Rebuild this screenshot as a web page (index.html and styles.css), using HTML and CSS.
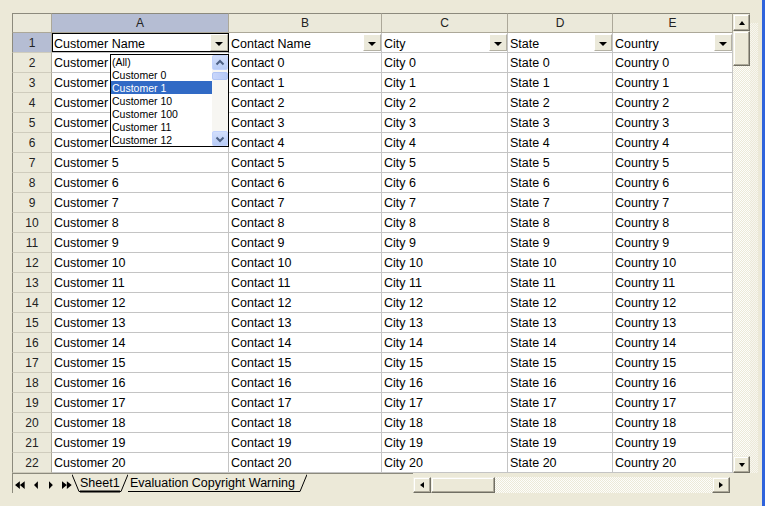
FILE: index.html
```html
<!DOCTYPE html>
<html>
<head>
<meta charset="utf-8">
<link rel="stylesheet" href="styles.css">
</head>
<body>
<div class="frame">
  <div class="content">
    <div class="top">
      <div class="sheet">
        <div class="ch corner"></div>
        <div class="ch sel">A</div>
        <div class="ch">B</div>
        <div class="ch">C</div>
        <div class="ch">D</div>
        <div class="ch">E</div>

        <div class="rh sel">1</div>
        <div class="c f active"><span class="t">Customer Name</span><span class="dd"><i></i></span></div>
        <div class="c f"><span class="t">Contact Name</span><span class="dd"><i></i></span></div>
        <div class="c f"><span class="t">City</span><span class="dd"><i></i></span></div>
        <div class="c f"><span class="t">State</span><span class="dd"><i></i></span></div>
        <div class="c f"><span class="t">Country</span><span class="dd"><i></i></span></div>

        <div class="rh">2</div><div class="c">Customer 0</div><div class="c">Contact 0</div><div class="c">City 0</div><div class="c">State 0</div><div class="c">Country 0</div>
        <div class="rh">3</div><div class="c">Customer 1</div><div class="c">Contact 1</div><div class="c">City 1</div><div class="c">State 1</div><div class="c">Country 1</div>
        <div class="rh">4</div><div class="c">Customer 2</div><div class="c">Contact 2</div><div class="c">City 2</div><div class="c">State 2</div><div class="c">Country 2</div>
        <div class="rh">5</div><div class="c">Customer 3</div><div class="c">Contact 3</div><div class="c">City 3</div><div class="c">State 3</div><div class="c">Country 3</div>
        <div class="rh">6</div><div class="c">Customer 4</div><div class="c">Contact 4</div><div class="c">City 4</div><div class="c">State 4</div><div class="c">Country 4</div>
        <div class="rh">7</div><div class="c">Customer 5</div><div class="c">Contact 5</div><div class="c">City 5</div><div class="c">State 5</div><div class="c">Country 5</div>
        <div class="rh">8</div><div class="c">Customer 6</div><div class="c">Contact 6</div><div class="c">City 6</div><div class="c">State 6</div><div class="c">Country 6</div>
        <div class="rh">9</div><div class="c">Customer 7</div><div class="c">Contact 7</div><div class="c">City 7</div><div class="c">State 7</div><div class="c">Country 7</div>
        <div class="rh">10</div><div class="c">Customer 8</div><div class="c">Contact 8</div><div class="c">City 8</div><div class="c">State 8</div><div class="c">Country 8</div>
        <div class="rh">11</div><div class="c">Customer 9</div><div class="c">Contact 9</div><div class="c">City 9</div><div class="c">State 9</div><div class="c">Country 9</div>
        <div class="rh">12</div><div class="c">Customer 10</div><div class="c">Contact 10</div><div class="c">City 10</div><div class="c">State 10</div><div class="c">Country 10</div>
        <div class="rh">13</div><div class="c">Customer 11</div><div class="c">Contact 11</div><div class="c">City 11</div><div class="c">State 11</div><div class="c">Country 11</div>
        <div class="rh">14</div><div class="c">Customer 12</div><div class="c">Contact 12</div><div class="c">City 12</div><div class="c">State 12</div><div class="c">Country 12</div>
        <div class="rh">15</div><div class="c">Customer 13</div><div class="c">Contact 13</div><div class="c">City 13</div><div class="c">State 13</div><div class="c">Country 13</div>
        <div class="rh">16</div><div class="c">Customer 14</div><div class="c">Contact 14</div><div class="c">City 14</div><div class="c">State 14</div><div class="c">Country 14</div>
        <div class="rh">17</div><div class="c">Customer 15</div><div class="c">Contact 15</div><div class="c">City 15</div><div class="c">State 15</div><div class="c">Country 15</div>
        <div class="rh">18</div><div class="c">Customer 16</div><div class="c">Contact 16</div><div class="c">City 16</div><div class="c">State 16</div><div class="c">Country 16</div>
        <div class="rh">19</div><div class="c">Customer 17</div><div class="c">Contact 17</div><div class="c">City 17</div><div class="c">State 17</div><div class="c">Country 17</div>
        <div class="rh">20</div><div class="c">Customer 18</div><div class="c">Contact 18</div><div class="c">City 18</div><div class="c">State 18</div><div class="c">Country 18</div>
        <div class="rh">21</div><div class="c">Customer 19</div><div class="c">Contact 19</div><div class="c">City 19</div><div class="c">State 19</div><div class="c">Country 19</div>
        <div class="rh">22</div><div class="c">Customer 20</div><div class="c">Contact 20</div><div class="c">City 20</div><div class="c">State 20</div><div class="c">Country 20</div>

        <div class="droplist">
          <div class="items">
            <div class="it">(All)</div>
            <div class="it">Customer 0</div>
            <div class="it on">Customer 1</div>
            <div class="it">Customer 10</div>
            <div class="it">Customer 100</div>
            <div class="it">Customer 11</div>
            <div class="it">Customer 12</div>
          </div>
          <div class="lscroll">
            <div class="lbtn"><svg width="14" height="14" viewBox="0 0 14 14"><path d="M3.5 8.5 L7 5 L10.5 8.5" fill="none" stroke="#4d6185" stroke-width="2"/></svg></div>
            <div class="lthumb"></div>
            <div class="ltrack"></div>
            <div class="lbtn"><svg width="14" height="14" viewBox="0 0 14 14"><path d="M3.5 5.5 L7 9 L10.5 5.5" fill="none" stroke="#4d6185" stroke-width="2"/></svg></div>
          </div>
        </div>
      </div>
      <div class="vscroll">
        <div class="btn"><i class="up"></i></div>
        <div class="vthumb"></div>
        <div class="track"></div>
        <div class="btn"><i class="down"></i></div>
      </div>
      <div class="strip"></div>
    </div>
    <div class="bottom">
      <div class="tabbar">
        <div class="nav">
          <svg width="12" height="8" viewBox="0 0 12 8"><path d="M0 4 L5 0 L5 8 Z M5 4 L10 0 L10 8 Z" fill="#000"/></svg>
          <svg width="5" height="8" viewBox="0 0 5 8"><path d="M0 4 L4 0 L4 8 Z" fill="#000"/></svg>
          <svg width="5" height="8" viewBox="0 0 5 8"><path d="M5 4 L1 0 L1 8 Z" fill="#000"/></svg>
          <svg width="10" height="8" viewBox="0 0 10 8"><path d="M5 4 L0 0 L0 8 Z M10 4 L5 0 L5 8 Z" fill="#000"/></svg>
        </div>
        <div class="tabs">
          <div class="tab act">
            <svg class="shape" viewBox="0 0 56 19" preserveAspectRatio="none"><path d="M0 0.5 L7 17.5 L49 17.5 L56 0.5" fill="none" stroke="#000" stroke-width="1"/><path d="M8 17.5 L48 17.5" stroke="#000" stroke-width="2"/></svg>
            <span>Sheet1</span>
          </div>
          <div class="tab">
            <svg class="shape" viewBox="0 0 179 19" preserveAspectRatio="none"><path d="M0 17.5 L172 17.5 L179 0.5" fill="none" stroke="#000" stroke-width="1"/></svg>
            <span>Evaluation Copyright Warning</span>
          </div>
        </div>
      </div>
      <div class="hscroll">
        <div class="hbtn"><i class="left"></i></div>
        <div class="hthumb"></div>
        <div class="track"></div>
        <div class="hbtn"><i class="right"></i></div>
      </div>
    </div>
  </div>
  <div class="edge"></div>
</div>
</body>
</html>
```

FILE: styles.css
```css
* { box-sizing: border-box; }
html, body { margin: 0; padding: 0; }
body {
  width: 765px;
  height: 506px;
  overflow: hidden;
  background: #ece9d8;
  font-family: "Liberation Sans", Arial, sans-serif;
  color: #000;
}
.frame { display: flex; height: 506px; }
.content {
  width: 762px;
  padding: 13px 0 0 12px;
  display: flex;
  flex-direction: column;
}
.edge { width: 3px; background: #2f63dc; }

.top { display: flex; height: 460px; }
.sheet {
  position: relative;
  display: grid;
  grid-template-columns: 40px 177px 153px 126px 105px 120px;
  grid-auto-rows: 20px;
  width: 721px;
  height: 460px;
  background: #fff;
  font-size: 12.5px;
}
.ch {
  background: #ebe9da;
  border-top: 1px solid #8c8a7d;
  border-right: 1px solid #aca899;
  border-bottom: 1px solid #aca899;
  text-align: center;
  line-height: 18px;
  font-size: 12px;
  color: #222;
}
.ch.corner { border-left: 1px solid #8c8a7d; }
.ch.sel { background: #b5bdd3; }
.rh {
  background: #ebe9da;
  border-left: 1px solid #8c8a7d;
  border-right: 1px solid #aca899;
  border-bottom: 1px solid #cfccbd;
  text-align: center;
  line-height: 19px;
  padding-top: 1px;
  font-size: 12px;
  color: #222;
}
.rh.sel { background: #b5bdd3; }
.c {
  border-right: 1px solid #c4c4c4;
  border-bottom: 1px solid #c4c4c4;
  line-height: 18px;
  padding-top: 1px;
  padding-left: 2px;
  white-space: nowrap;
  overflow: hidden;
}
.c.f { display: flex; align-items: center; padding-right: 0; padding-top: 0; }
.c.f .t { flex: 1; overflow: hidden; padding-top: 2px; }
.c.active { box-shadow: inset 0 0 0 1px #000; border-right-color: #000; }
.dd {
  width: 18px;
  height: 17px;
  margin-top: 0;
  background: #ebe9da;
  border: 1px solid;
  border-color: #fff #b4b1a3 #b4b1a3 #fff;
  display: flex;
  align-items: center;
  justify-content: center;
}
.dd i, .btn i, .hbtn i {
  display: block;
  width: 0; height: 0;
  border-style: solid;
}
.dd i { border-width: 4px 4px 0 4px; border-color: #000 transparent transparent transparent; margin-top: 2px; }

.droplist {
  position: absolute;
  left: 98px;
  top: 41px;
  width: 119px;
  height: 93px;
  border: 1px solid #000;
  background: #fff;
  display: flex;
}
.items { flex: 1; font-size: 10.5px; }
.it { height: 13px; line-height: 12px; padding-top: 1px; padding-left: 1px; white-space: nowrap; overflow: hidden; }
.it.on { background: #316ac5; color: #fff; }
.lscroll { width: 16px; display: flex; flex-direction: column; background: #f7f6f2; }
.lbtn {
  height: 15px;
  background: linear-gradient(#d2defb, #b8ccf6);
  border: 1px solid #c3d3fd;
  border-radius: 2px;
  display: flex; align-items: center; justify-content: center;
}
.lthumb {
  height: 8px;
  margin-top: 2px;
  background: linear-gradient(90deg, #c8d6fb, #b6c9f6);
  border: 1px solid #b0c4f4;
  border-radius: 2px;
}
.ltrack { flex: 1; }

.vscroll {
  width: 17px;
  display: flex;
  flex-direction: column;
  border-top: 1px solid #8c8a7d;
}
.btn, .hbtn, .vthumb, .hthumb {
  background: #ece9d8;
  border: 1px solid;
  border-color: #f1efe2 #716f64 #716f64 #f1efe2;
  box-shadow: inset -1px -1px 0 #aca899, inset 1px 1px 0 #fff;
}
.btn { height: 17px; display: flex; align-items: center; justify-content: center; }
.vthumb { height: 35px; }
.track {
  flex: 1;
  background-color: #fbfbf9;
  background-image: repeating-conic-gradient(#fdfdfb 0 25%, #ece9d8 0 50%);
  background-size: 2px 2px;
}
.btn i.up { border-width: 0 3.5px 4px 3.5px; border-color: transparent transparent #000 transparent; }
.btn i.down { border-width: 4px 3.5px 0 3.5px; border-color: #000 transparent transparent transparent; }
.strip {
  width: 8px;
  margin-top: 10px;
  background-image: repeating-conic-gradient(#f7f6f0 0 25%, #ece9d8 0 50%);
  background-size: 2px 2px;
}

.bottom { display: flex; height: 20px; }
.tabbar {
  width: 401px;
  display: flex;
  border-left: 1px solid #8c8a7d;
  border-top: 1px solid #8c8a7d;
}
.nav {
  display: flex;
  align-items: center;
  padding-left: 2px;
  padding-top: 2px;
  width: 59px;
  height: 19px;
}
.nav svg:nth-child(2) { margin-left: 7px; }
.nav svg:nth-child(3) { margin-left: 10px; }
.nav svg:nth-child(4) { margin-left: 9px; }
.tabs { display: flex; height: 19px; }
.tab {
  position: relative;
  height: 19px;
  font-size: 12.5px;
  line-height: 15px;
  padding-top: 2px;
  white-space: nowrap;
}
.tab.act { width: 56px; padding-left: 8px; }
.tab:not(.act) { width: 179px; padding-left: 2px; }
.tab .shape { position: absolute; left: 0; top: 0; width: 100%; height: 100%; }
.tab span { position: relative; }

.hscroll {
  width: 317px;
  height: 16px;
  margin-top: 4px;
  display: flex;
}
.hbtn { width: 18px; display: flex; align-items: center; justify-content: center; }
.hthumb { width: 64px; }
.hbtn i.left { border-width: 3.5px 4px 3.5px 0; border-color: transparent #000 transparent transparent; }
.hbtn i.right { border-width: 3.5px 0 3.5px 4px; border-color: transparent transparent transparent #000; }
```
